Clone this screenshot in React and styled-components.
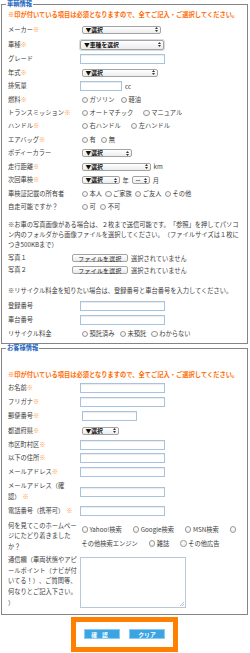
import styled, { createGlobalStyle } from "styled-components";

const GlobalStyle = createGlobalStyle`
  html, body {
    margin: 0;
    padding: 0;
    background: #fff;
  }
  body {
    font-family: "Noto Sans CJK JP", "Noto Sans", sans-serif;
    font-size: 6.25px;
    color: #3c3c3c;
    text-spacing-trim: space-all;
  }
`;

const Page = styled.div`
  width: 250px;
  padding-left: 1px;
  box-sizing: border-box;
`;

const Fieldset = styled.fieldset`
  box-sizing: border-box;
  width: 247px;
  margin: 0;
  padding: 0 5px 3px 6px;
  border: 1px solid #858585;
  padding-bottom: ${(p) => p.pb || 3}px;
`;

const Legend = styled.legend`
  padding: 0 1px;
  margin-left: -2px;
  height: 8px;
  line-height: 8px;
  font-weight: bold;
  color: #1a62c0;
  font-size: 6.25px;
`;

const Note = styled.p`
  margin: ${(p) => p.mt || 0}px 0 0;
  line-height: ${(p) => p.lh || 10}px;
  color: ${(p) => (p.accent ? "#ff6a00" : "#3c3c3c")};
  font-weight: ${(p) => (p.accent ? "bold" : "normal")};
`;

const Row = styled.div`
  display: grid;
  grid-template-columns: ${(p) => p.lw || 72}px 1fr;
  align-items: ${(p) => (p.top ? "start" : "center")};
  height: ${(p) => p.h}px;
  margin-top: ${(p) => p.mt || 0}px;
`;

const Label = styled.div`
  line-height: ${(p) => p.lh || 8}px;
  color: #3c3c3c;
`;

const Req = styled.span`
  color: #ff9a3c;
  font-weight: bold;
  margin-left: ${(p) => p.gap || 0}px;
`;

const Control = styled.div`
  display: flex;
  align-items: center;
  gap: 3px;
  margin-top: ${(p) => p.mt || 0}px;
`;

const Flow = styled.div`
  line-height: 14px;
  padding-left: 1.5px;
`;

const SelectBox = styled.div`
  display: inline-flex;
  align-items: center;
  justify-content: space-between;
  box-sizing: border-box;
  width: ${(p) => p.w}px;
  height: ${(p) => (p.big ? 10 : 8)}px;
  margin-left: ${(p) => (p.ml === undefined ? 1.5 : p.ml)}px;
  padding: 0 2px 0 3px;
  border: 1px solid #a3a3a3;
  border-radius: 2px;
  background: linear-gradient(#ffffff, #ececec);
  box-shadow: ${(p) => (p.big ? "0 0 0 1px #d5dbe4" : "none")};
  font-size: 5.8px;
  font-weight: bold;
  color: #111;
  line-height: 1;
`;

const TextInput = styled.div`
  box-sizing: border-box;
  width: ${(p) => p.w}px;
  height: 10px;
  margin-left: ${(p) => p.ml || 0}px;
  border: 1px solid #a9c2de;
  background: #fff;
  box-shadow: inset 0 1px 1px rgba(0, 0, 0, 0.08);
`;

const TextArea = styled.div`
  position: relative;
  box-sizing: border-box;
  width: 106px;
  height: 51px;
  margin-top: 2px;
  border: 1px solid #b8c8dc;
  background: #fff;
`;

const Grip = styled.svg`
  position: absolute;
  right: 1px;
  bottom: 1px;
`;

const RadioItem = styled.span`
  margin-right: ${(p) => p.gap}px;
  white-space: normal;
`;

const Circle = styled.span`
  display: inline-block;
  box-sizing: border-box;
  width: 6.5px;
  height: 6.5px;
  margin-right: 1.5px;
  vertical-align: -1px;
  border: 1px solid #9a9a9a;
  border-radius: 50%;
  background: radial-gradient(circle at 50% 35%, #ffffff, #e6e6e6);
`;

const Unit = styled.span`
  color: #3c3c3c;
`;

const FileButton = styled.div`
  box-sizing: border-box;
  width: 56px;
  height: 8px;
  display: flex;
  align-items: center;
  justify-content: center;
  border: 1px solid #a3a3a3;
  border-radius: 2px;
  background: linear-gradient(#ffffff, #e9e9e9);
  font-size: 5.8px;
  letter-spacing: 0.4px;
  color: #222;
`;

const ButtonBox = styled.div`
  box-sizing: border-box;
  width: 107px;
  margin: 2px 0 0 70px;
  padding: 7px 0 8px;
  border: 5px solid #ff7f00;
  display: flex;
  justify-content: center;
  gap: 9px;
`;

const Button = styled.div`
  box-sizing: border-box;
  width: 36px;
  height: 10px;
  display: flex;
  align-items: center;
  justify-content: center;
  background: #3aa5e2;
  border: 1px solid #8cccf0;
  color: #fff;
  font-size: 5.8px;
  font-weight: bold;
  letter-spacing: ${(p) => p.ls || 0}px;
`;

const Arrows = () => (
  <svg width="3" height="5" viewBox="0 0 3 5">
    <path d="M1.5 0 L3 2 L0 2 Z M0 3 L3 3 L1.5 5 Z" fill="#333" />
  </svg>
);

const Select = ({ w, text = "▼選択", big, ml }) => (
  <SelectBox w={w} big={big} ml={ml}>
    <span>{text}</span>
    <Arrows />
  </SelectBox>
);

const Radios = ({ items, gap = 5 }) => (
  <Flow>
    {items.map((t) => (
      <RadioItem key={t} gap={gap}>
        <Circle />
        {t}
      </RadioItem>
    ))}
  </Flow>
);

const Field = ({ label, req, h, children, lh, top, mt, lw, reqGap }) => (
  <Row h={h} top={top} mt={mt} lw={lw}>
    <Label lh={lh}>
      {label}
      {req && <Req gap={reqGap}>※</Req>}
    </Label>
    {children}
  </Row>
);

const REQUIRED_NOTE =
  "※印が付いている項目は必須となりますので、全てご記入・ご選択してください。";

export default function App() {
  return (
    <Page>
      <GlobalStyle />
      <Fieldset>
        <Legend>車輌情報</Legend>
        <Note accent mt={2}>
          {REQUIRED_NOTE}
        </Note>
        <Field label="メーカー" req h={15} mt={2}>
          <Control>
            <Select w={79} />
          </Control>
        </Field>
        <Field label="車種" req h={15}>
          <Control>
            <Select w={84} text="▼車種を選択" big ml={0} />
          </Control>
        </Field>
        <Field label="グレード" h={14}>
          <Control>
            <TextInput w={85} />
          </Control>
        </Field>
        <Field label="年式" req h={13}>
          <Control>
            <Select w={76} />
          </Control>
        </Field>
        <Field label="排気量" h={14}>
          <Control>
            <TextInput w={42} />
            <Unit>cc</Unit>
          </Control>
        </Field>
        <Field label="燃料" req h={13}>
          <Radios items={["ガソリン", "軽油"]} gap={6} />
        </Field>
        <Field label="トランスミッション" req h={13}>
          <Radios items={["オートマチック", "マニュアル"]} gap={10} />
        </Field>
        <Field label="ハンドル" req h={14}>
          <Radios items={["右ハンドル", "左ハンドル"]} gap={10} />
        </Field>
        <Field label="エアバッグ" req h={13}>
          <Radios items={["有", "無"]} gap={5} />
        </Field>
        <Field label="ボディーカラー" h={14}>
          <Control>
            <Select w={50} />
          </Control>
        </Field>
        <Field label="走行距離" req h={13}>
          <Control>
            <Select w={69} />
            <Unit>km</Unit>
          </Control>
        </Field>
        <Field label="次回車検" req h={14}>
          <Control>
            <Select w={38} />
            <Unit>年</Unit>
            <Select w={18} text="--" ml={0} />
            <Unit>月</Unit>
          </Control>
        </Field>
        <Field label="車検証記載の所有者" h={13}>
          <Radios items={["本人", "ご家族", "ご友人", "その他"]} gap={3} />
        </Field>
        <Field label="自走可能ですか？" h={13}>
          <Radios items={["可", "不可"]} gap={4} />
        </Field>
        <Note mt={7}>
          ※お車の写真画像がある場合は、２枚まで送信可能です。「参照」を押してパソコン内のフォルダから画像ファイルを選択してください。（ファイルサイズは１枚につき500KBまで）
        </Note>
        <Field label="写真１" h={12} mt={2} lw={64}>
          <Control>
            <FileButton>ファイルを選択</FileButton>
            <Unit>選択されていません</Unit>
          </Control>
        </Field>
        <Field label="写真２" h={12} lw={64}>
          <Control>
            <FileButton>ファイルを選択</FileButton>
            <Unit>選択されていません</Unit>
          </Control>
        </Field>
        <Note mt={10}>
          ※リサイクル料金を知りたい場合は、登録番号と車台番号を入力してください。
        </Note>
        <Field label="登録番号" h={14} mt={3}>
          <Control>
            <TextInput w={85} />
          </Control>
        </Field>
        <Field label="車台番号" h={14}>
          <Control>
            <TextInput w={85} />
          </Control>
        </Field>
        <Field label="リサイクル料金" h={13}>
          <Radios items={["預託済み", "未預託", "わからない"]} gap={5} />
        </Field>
      </Fieldset>

      <Fieldset pb={4}>
        <Legend>お客様情報</Legend>
        <Note accent mt={18}>
          {REQUIRED_NOTE}
        </Note>
        <Field label="お名前" req h={14} mt={1}>
          <Control>
            <TextInput w={85} />
          </Control>
        </Field>
        <Field label="フリガナ" req h={14}>
          <Control>
            <TextInput w={85} />
          </Control>
        </Field>
        <Field label="郵便番号" req h={14}>
          <Control>
            <TextInput w={55} ml={1.5} />
          </Control>
        </Field>
        <Field label="都道府県" req h={15}>
          <Control>
            <Select w={37} />
          </Control>
        </Field>
        <Field label="市区町村区" req h={13}>
          <Control>
            <TextInput w={85} />
          </Control>
        </Field>
        <Field label="以下の住所" req h={14}>
          <Control>
            <TextInput w={85} />
          </Control>
        </Field>
        <Field label="メールアドレス" req h={14}>
          <Control>
            <TextInput w={85} />
          </Control>
        </Field>
        <Field
          label={
            <>
              メールアドレス（確
              <br />
              認）
            </>
          }
          req
          reqGap={2}
          h={25}
          lh={10.5}
        >
          <Control>
            <TextInput w={85} />
          </Control>
        </Field>
        <Field label="電話番号（携帯可）" req reqGap={2} h={14}>
          <Control>
            <TextInput w={85} />
          </Control>
        </Field>
        <Field label="何を見てこのホームページにたどり着きましたか？" h={37} lh={10.5}>
          <Radios
            items={[
              "Yahoo!検索",
              "Google検索",
              "MSN検索",
              "その他検索エンジン",
              "雑誌",
              "その他広告",
            ]}
            gap={11}
          />
        </Field>
        <Field
          label={
            <>
              通信欄（車両状態やアピールポイント（ナビが付いてる！）、ご質問等、何なりとご記入下さい。
              <br />）
            </>
          }
          h={55}
          lh={10.7}
          top
        >
          <TextArea>
            <Grip width="4" height="4" viewBox="0 0 4 4">
              <path d="M4 0 L0 4 M4 2 L2 4" stroke="#999" strokeWidth="0.6" />
            </Grip>
          </TextArea>
        </Field>
      </Fieldset>

      <ButtonBox>
        <Button ls={5}>確認</Button>
        <Button>クリア</Button>
      </ButtonBox>
    </Page>
  );
}
